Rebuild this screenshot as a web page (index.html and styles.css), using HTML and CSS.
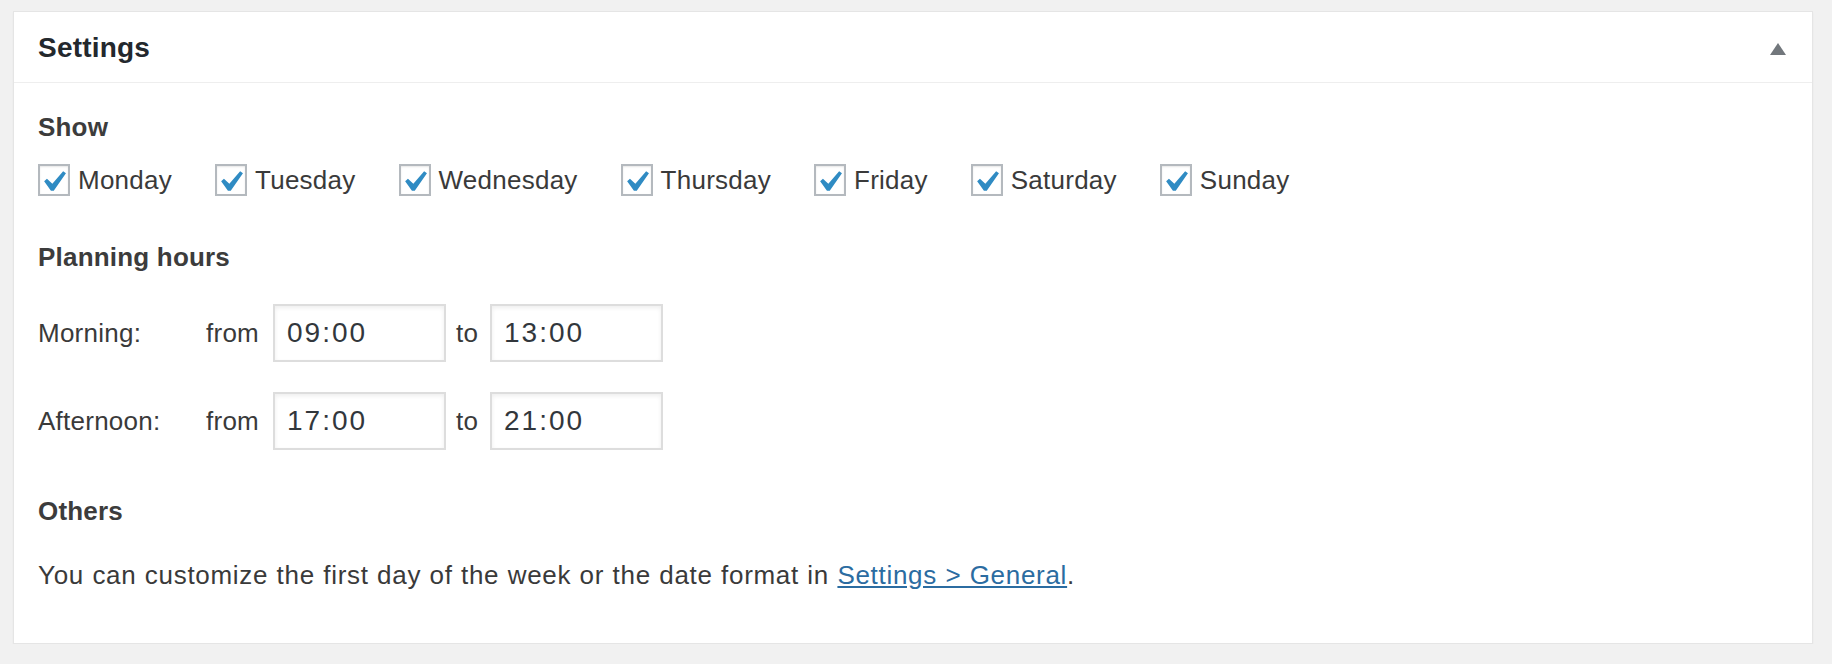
FILE: index.html
```html
<!DOCTYPE html>
<html lang="en">
<head>
<meta charset="utf-8">
<title>Settings</title>
<link rel="stylesheet" href="styles.css">
</head>
<body>
<div class="postbox">
  <div class="postbox-header">
    <h2 class="hndle">Settings</h2>
    <button class="handlediv" type="button" aria-label="Toggle panel"><span class="toggle-indicator"></span></button>
  </div>
  <div class="inside">
    <h3 class="section-title">Show</h3>
    <div class="days">
      <label class="day"><span class="cb"><svg viewBox="0 0 20 20"><path d="M14.83 4.89l1.34.94-5.81 8.38H9.02L5.78 9.67l1.34-1.25 2.57 2.4z"/></svg></span>Monday</label>
      <label class="day"><span class="cb"><svg viewBox="0 0 20 20"><path d="M14.83 4.89l1.34.94-5.81 8.38H9.02L5.78 9.67l1.34-1.25 2.57 2.4z"/></svg></span>Tuesday</label>
      <label class="day"><span class="cb"><svg viewBox="0 0 20 20"><path d="M14.83 4.89l1.34.94-5.81 8.38H9.02L5.78 9.67l1.34-1.25 2.57 2.4z"/></svg></span>Wednesday</label>
      <label class="day"><span class="cb"><svg viewBox="0 0 20 20"><path d="M14.83 4.89l1.34.94-5.81 8.38H9.02L5.78 9.67l1.34-1.25 2.57 2.4z"/></svg></span>Thursday</label>
      <label class="day"><span class="cb"><svg viewBox="0 0 20 20"><path d="M14.83 4.89l1.34.94-5.81 8.38H9.02L5.78 9.67l1.34-1.25 2.57 2.4z"/></svg></span>Friday</label>
      <label class="day"><span class="cb"><svg viewBox="0 0 20 20"><path d="M14.83 4.89l1.34.94-5.81 8.38H9.02L5.78 9.67l1.34-1.25 2.57 2.4z"/></svg></span>Saturday</label>
      <label class="day"><span class="cb"><svg viewBox="0 0 20 20"><path d="M14.83 4.89l1.34.94-5.81 8.38H9.02L5.78 9.67l1.34-1.25 2.57 2.4z"/></svg></span>Sunday</label>
    </div>
    <h3 class="section-title hours-title">Planning hours</h3>
    <div class="hours">
      <span class="period">Morning:</span>
      <span class="word">from</span>
      <input class="time" type="text" value="09:00">
      <span class="word to">to</span>
      <input class="time" type="text" value="13:00">
      <span class="period">Afternoon:</span>
      <span class="word">from</span>
      <input class="time" type="text" value="17:00">
      <span class="word to">to</span>
      <input class="time" type="text" value="21:00">
    </div>
    <h3 class="section-title others-title">Others</h3>
    <p class="note">You can customize the first day of the week or the date format in <a href="#">Settings &gt; General</a>.</p>
  </div>
</div>
</body>
</html>
```
FILE: styles.css
```css
html, body {
  margin: 0;
  padding: 0;
}
body {
  background: #f1f1f1;
  font-family: "Liberation Sans", Arial, sans-serif;
  font-size: 26px;
  color: #444;
  letter-spacing: 0.25px;
}
.postbox {
  margin: 11px 0 0 13px;
  width: 1800px;
  box-sizing: border-box;
  background: #fff;
  border: 1px solid #e5e5e5;
  box-shadow: 0 2px 2px rgba(0, 0, 0, 0.04);
}
.postbox-header {
  height: 70px;
  border-bottom: 1px solid #eee;
  display: flex;
  align-items: center;
  justify-content: space-between;
  padding: 0 26px 0 24px;
}
.hndle {
  margin: 0;
  font-size: 28px;
  line-height: 36px;
  font-weight: 700;
  color: #23282d;
  letter-spacing: 0.2px;
  position: relative;
  top: 1px;
}
.handlediv {
  border: 0;
  background: transparent;
  padding: 0;
  margin: 3px 0 0 0;
  width: 16px;
  height: 12px;
  display: flex;
}
.toggle-indicator {
  width: 0;
  height: 0;
  border-left: 8px solid transparent;
  border-right: 8px solid transparent;
  border-bottom: 12px solid #72777c;
}
.inside {
  padding: 26px 24px 50px;
}
.section-title {
  margin: 0;
  font-size: 26px;
  line-height: 36px;
  font-weight: 700;
  color: #3c3c3c;
  letter-spacing: 0.2px;
}
.days {
  margin-top: 19px;
  height: 32px;
  display: flex;
  align-items: center;
}
.day {
  display: flex;
  align-items: center;
  margin-right: 43px;
  line-height: 32px;
  color: #3a3a3a;
}
.cb {
  position: relative;
  width: 32px;
  height: 32px;
  box-sizing: border-box;
  border: 2px solid #b4b9be;
  background: #fff;
  box-shadow: inset 0 1px 2px rgba(0, 0, 0, 0.1);
  margin-right: 8px;
  flex: none;
}
.cb svg {
  position: absolute;
  left: -8px;
  top: -5px;
  width: 42px;
  height: 42px;
  fill: #2f8bc3;
}
.hours-title {
  margin-top: 43px;
}
.hours {
  margin-top: 29px;
  display: grid;
  grid-template-columns: 168px 67px 173px 44px 173px;
  row-gap: 30px;
  align-items: center;
  color: #3a3a3a;
}
.to {
  padding-left: 10px;
}
.time {
  width: 173px;
  height: 58px;
  box-sizing: border-box;
  margin: 0;
  border: 2px solid #ddd;
  padding: 0 12px;
  background: #fff;
  box-shadow: inset 0 2px 4px rgba(0, 0, 0, 0.07);
  font-family: "Liberation Sans", Arial, sans-serif;
  font-size: 28px;
  color: #32373c;
  letter-spacing: 2px;
  outline: none;
}
.others-title {
  margin-top: 43px;
}
.note {
  margin: 28px 0 0;
  line-height: 36px;
  color: #3a3a3a;
  letter-spacing: 0.7px;
  word-spacing: 0.5px;
}
.note a {
  color: #2b6ca1;
  text-decoration: underline;
}
```
